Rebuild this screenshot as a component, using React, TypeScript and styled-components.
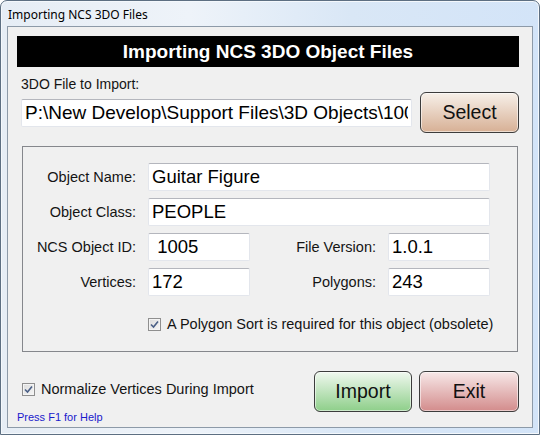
import styled, { createGlobalStyle } from "styled-components";

const GlobalStyle = createGlobalStyle`
  html, body {
    margin: 0;
    padding: 0;
    background: #ffffff;
  }
  * {
    box-sizing: border-box;
  }
`;

const Window = styled.div`
  width: 540px;
  height: 435px;
  display: flex;
  flex-direction: column;
  border: 1px solid #5d6f82;
  border-radius: 7px 7px 0 0;
  background: linear-gradient(90deg, #e6edf5 0%, #eef3f9 35%, #d9e7f6 65%, #d3e4f8 100%);
  box-shadow: inset 0 0 0 1px #f4f8fc;
  overflow: hidden;
`;

const TitleBar = styled.div`
  height: 25px;
  padding: 5px 0 0 7px;
  font-family: "Noto Sans", "Liberation Sans", sans-serif;
  font-size: 12px;
  color: #000;
`;

const Client = styled.div`
  flex: 1;
  margin: 0 6px 6px 6px;
  border: 1px solid #8d9aa8;
  background: #f0f0f0;
  padding: 9px 13px 0 9px;
  display: flex;
  flex-direction: column;
  font-family: "Liberation Sans", Arial, sans-serif;
  color: #141414;
`;

const Banner = styled.div`
  height: 31px;
  background: #000;
  color: #fff;
  font-weight: bold;
  font-size: 19px;
  display: flex;
  align-items: center;
  justify-content: center;
`;

const FieldCaption = styled.div`
  margin: 9px 0 0 4px;
  font-size: 14px;
  line-height: 16px;
`;

const FileRow = styled.div`
  display: flex;
  align-items: center;
  gap: 8px;
  margin: 0 0 0 4px;
`;

const TextBox = styled.input<{ $size?: number }>`
  height: 28px;
  width: 100%;
  min-width: 0;
  padding: 0 3px;
  border: 1px solid #e3e6ec;
  border-top-color: #b4b6bd;
  border-radius: 2px;
  background: #fff;
  font-family: "Liberation Sans", Arial, sans-serif;
  font-size: ${(p) => p.$size || 18.5}px;
  color: #000;
  outline: none;
`;

const FileBox = styled(TextBox)`
  width: 391px;
  flex: none;
`;

const DialogButton = styled.button<{ $top: string; $bottom: string; $w: number }>`
  width: ${(p) => p.$w}px;
  height: 41px;
  border: 1px solid #3c3c3c;
  border-radius: 6px;
  background: linear-gradient(180deg, ${(p) => p.$top} 0%, ${(p) => p.$bottom} 100%);
  box-shadow: inset 0 0 0 1px rgba(255, 255, 255, 0.55);
  font-family: "Liberation Sans", Arial, sans-serif;
  font-size: 19.5px;
  color: #111;
  padding: 0;
  cursor: pointer;
`;

const GroupBox = styled.div`
  margin: 13px 0 0 5px;
  width: 496px;
  height: 206px;
  border: 1px solid #85878c;
  padding: 16px 0 0 0;
`;

const FieldGrid = styled.div`
  display: grid;
  grid-template-columns: 113px 102px 114px 102px;
  column-gap: 12px;
  row-gap: 7px;
  align-items: center;
`;

const Label = styled.label`
  font-size: 14.5px;
  text-align: right;
  white-space: nowrap;
`;

const WideBox = styled(TextBox)`
  grid-column: 2 / 5;
`;

const CheckRow = styled.label<{ $indent: number; $size: number }>`
  display: flex;
  align-items: center;
  gap: 6px;
  padding-left: ${(p) => p.$indent}px;
  font-size: ${(p) => p.$size}px;
  white-space: nowrap;
`;

const Box = styled.span`
  width: 13px;
  height: 13px;
  flex: none;
  border: 1px solid #8f8f8f;
  background: linear-gradient(135deg, #dcdcdc 0%, #f6f6f6 100%);
  box-shadow: inset 0 0 0 1px #f4f4f4;
  display: flex;
  align-items: center;
  justify-content: center;
`;

const PolySort = styled.div`
  margin-top: 20px;
`;

const BottomRow = styled.div`
  display: flex;
  justify-content: space-between;
  margin: 19px 0 0 0;
`;

const LeftCol = styled.div`
  display: flex;
  flex-direction: column;
  padding-top: 10px;
`;

const HelpText = styled.div`
  margin-top: 14px;
  font-size: 11px;
  color: #1a1acc;
`;

const ButtonPair = styled.div`
  display: flex;
  gap: 7px;
`;

function Check() {
  return (
    <Box>
      <svg width="9" height="9" viewBox="0 0 9 9">
        <path d="M1 4.5 L3.5 7 L8 1.5" fill="none" stroke="#4a5f86" strokeWidth="1.6" />
      </svg>
    </Box>
  );
}

export default function App() {
  return (
    <>
      <GlobalStyle />
      <Window>
        <TitleBar>Importing NCS 3DO Files</TitleBar>
        <Client>
          <Banner>Importing NCS 3DO Object Files</Banner>
          <FieldCaption>3DO File to Import:</FieldCaption>
          <FileRow>
            <FileBox readOnly value={"P:\\New Develop\\Support Files\\3D Objects\\1005 Guitar Figure.3do"} $size={19} />
            <DialogButton $top="#f7f0e9" $bottom="#d7b095" $w={99}>Select</DialogButton>
          </FileRow>
          <GroupBox>
            <FieldGrid>
              <Label>Object Name:</Label>
              <WideBox readOnly value="Guitar Figure" />
              <Label>Object Class:</Label>
              <WideBox readOnly value="PEOPLE" />
              <Label>NCS Object ID:</Label>
              <TextBox readOnly value=" 1005" />
              <Label>File Version:</Label>
              <TextBox readOnly value="1.0.1" />
              <Label>Vertices:</Label>
              <TextBox readOnly value="172" />
              <Label>Polygons:</Label>
              <TextBox readOnly value="243" />
            </FieldGrid>
            <PolySort>
              <CheckRow $indent={125} $size={14.5}>
                <Check />
                A Polygon Sort is required for this object (obsolete)
              </CheckRow>
            </PolySort>
          </GroupBox>
          <BottomRow>
            <LeftCol>
              <CheckRow $indent={5} $size={14.5}>
                <Check />
                Normalize Vertices During Import
              </CheckRow>
              <HelpText>Press F1 for Help</HelpText>
            </LeftCol>
            <ButtonPair>
              <DialogButton $top="#f0f8ef" $bottom="#8ecf8a" $w={98}>Import</DialogButton>
              <DialogButton $top="#f7e8e8" $bottom="#d38c8c" $w={100}>Exit</DialogButton>
            </ButtonPair>
          </BottomRow>
        </Client>
      </Window>
    </>
  );
}
